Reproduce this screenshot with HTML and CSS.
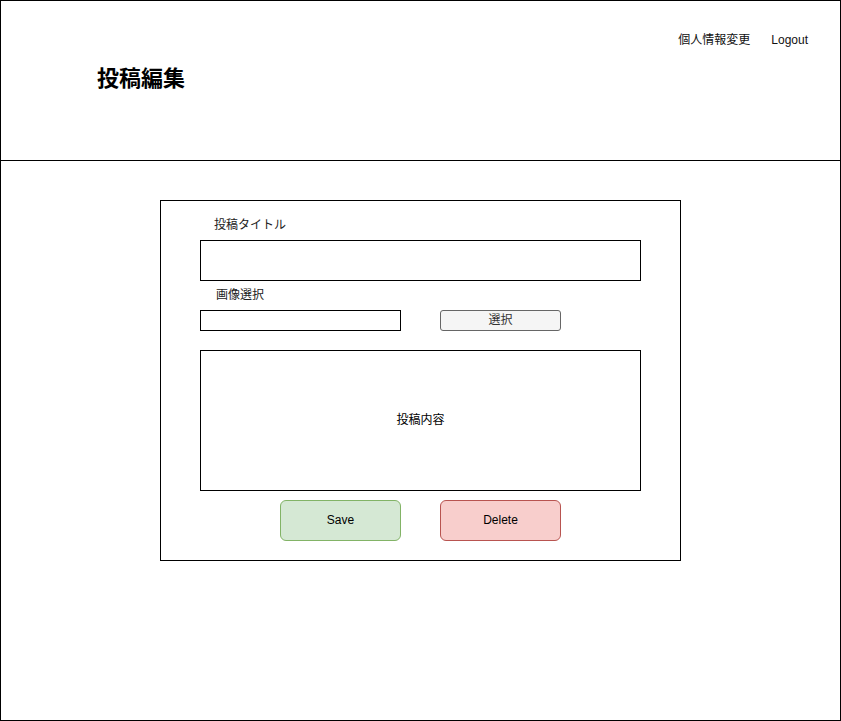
FILE: index.html
```html
<!DOCTYPE html>
<html lang="ja">
<head>
<meta charset="utf-8">
<title>投稿編集</title>
<link rel="stylesheet" href="styles.css">
</head>
<body>
<div class="page">
  <header class="header">
    <h1 class="title">投稿編集</h1>
    <nav class="nav">
      <span class="nav-item">個人情報変更</span>
      <span class="nav-item">Logout</span>
    </nav>
  </header>
  <main class="main">
    <div class="form">
      <div class="label label-title">投稿タイトル</div>
      <div class="input input-wide"></div>
      <div class="label label-image">画像選択</div>
      <div class="file-row">
        <div class="input input-file"></div>
        <div class="btn-select">選択</div>
      </div>
      <div class="textarea"><span class="center-text">投稿内容</span></div>
      <div class="actions">
        <div class="btn btn-save"><span class="center-text">Save</span></div>
        <div class="btn btn-delete"><span class="center-text">Delete</span></div>
      </div>
    </div>
  </main>
</div>
</body>
</html>
```

FILE: styles.css
```css
* { box-sizing: border-box; }
html, body { margin: 0; padding: 0; background: #fff; }
body {
  font-family: "Liberation Sans", "Noto Sans CJK JP", sans-serif;
  font-size: 12px;
  color: #000;
}
.page {
  width: 841px;
  height: 721px;
  border: 1px solid #000;
  display: flex;
  flex-direction: column;
}
.header {
  height: 160px;
  border-bottom: 1px solid #000;
  display: flex;
  justify-content: space-between;
  padding-left: 96px;
  padding-right: 32px;
}
.title {
  margin: 0;
  align-self: center;
  font-size: 22px;
  font-weight: bold;
  line-height: 26px;
  margin-top: -3px;
}
.nav {
  display: flex;
  gap: 21px;
  margin-top: 31px;
  align-self: flex-start;
  line-height: 16px;
  color: #111;
}
.main {
  padding-top: 39px;
  padding-left: 159px;
}
.form {
  width: 521px;
  height: 361px;
  border: 1px solid #000;
  padding-left: 39px;
  display: flex;
  flex-direction: column;
}
.label {
  line-height: 14px;
  color: #222;
}
.label-title {
  padding-top: 17px;
  padding-left: 14px;
  height: 39px;
}
.label-image {
  padding-top: 7px;
  padding-left: 16px;
  height: 29px;
}
.input {
  border: 1px solid #000;
  background: #fff;
}
.input-wide { width: 441px; height: 41px; }
.file-row {
  display: flex;
  gap: 39px;
}
.input-file { width: 201px; height: 21px; }
.btn-select {
  width: 121px;
  height: 21px;
  border: 1px solid #666;
  border-radius: 3px;
  background: #f5f5f5;
  color: #333;
  display: flex;
  align-items: center;
  justify-content: center;
  line-height: 14px;
  padding-bottom: 1px;
}
.textarea {
  margin-top: 19px;
  width: 441px;
  height: 141px;
  border: 1px solid #000;
  display: flex;
  align-items: center;
  justify-content: center;
}
.center-text {
  line-height: 14px;
  margin-top: -2px;
}
.actions {
  margin-top: 9px;
  padding-left: 80px;
  display: flex;
  gap: 39px;
}
.btn {
  width: 121px;
  height: 41px;
  border-radius: 6px;
  display: flex;
  align-items: center;
  justify-content: center;
  color: #000;
}
.btn-save { background: #d5e8d4; border: 1px solid #82b366; }
.btn-delete { background: #f8cecc; border: 1px solid #b85450; }
```
